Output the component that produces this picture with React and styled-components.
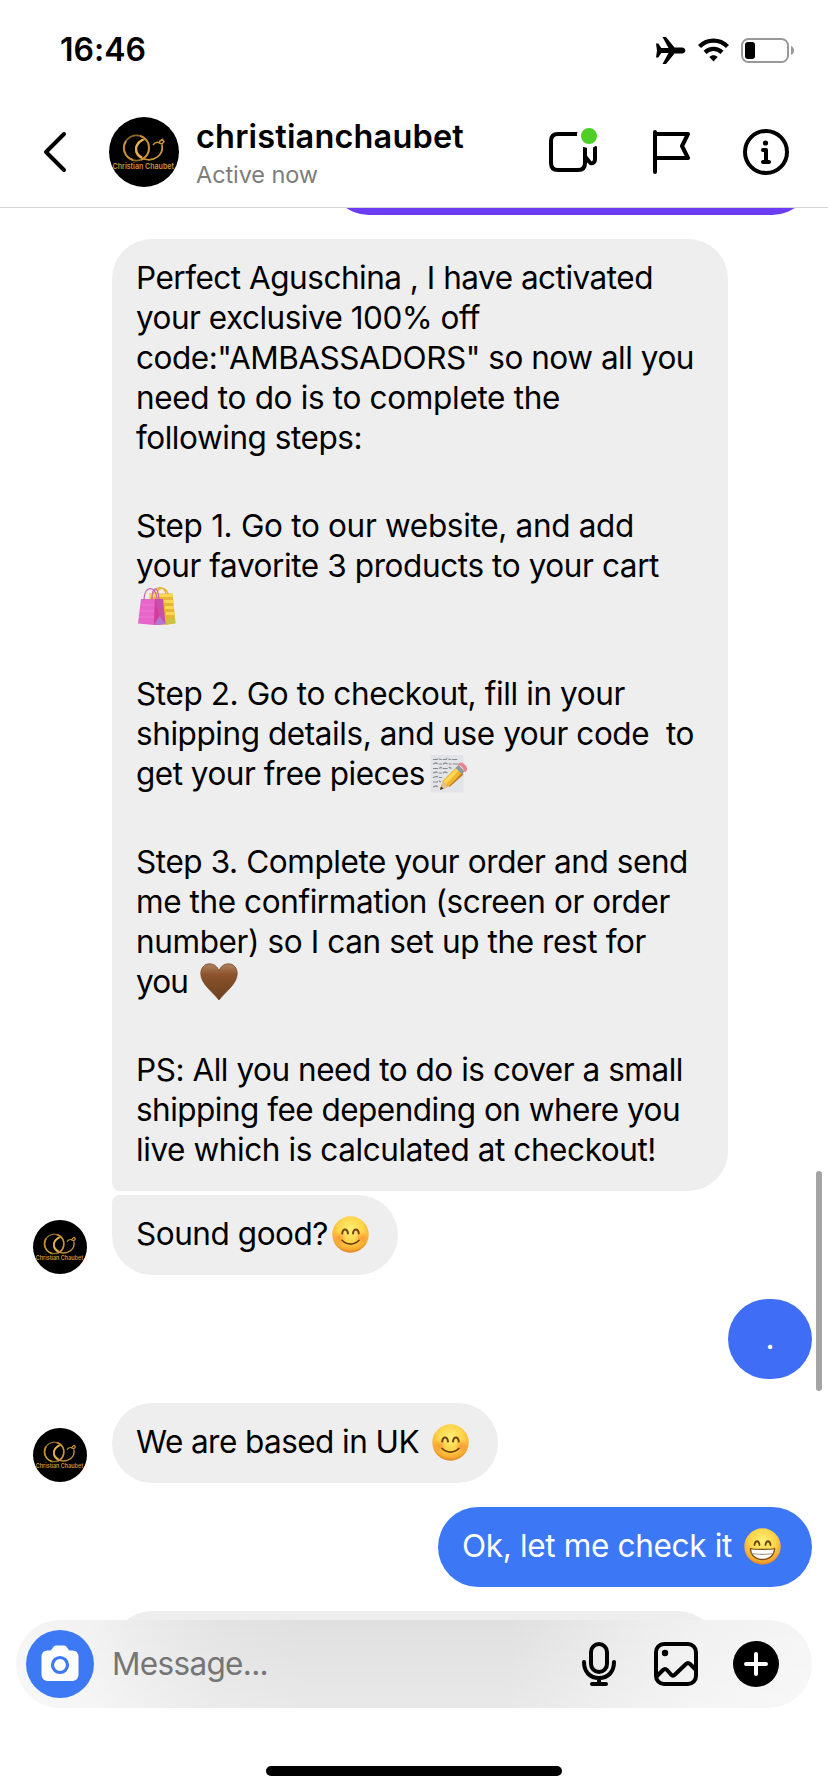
import React, { useLayoutEffect, useRef, useState } from "react";
import styled, { createGlobalStyle } from "styled-components";


const GlobalStyle = createGlobalStyle`
    * {
        box-sizing: border-box;
    }

    body {
        margin: 0;
        background: #fff;
        font-family: Inter, "Liberation Sans", sans-serif;
        color: #000;
    }
`

const Screen = styled.main`
    width: 828px;
    height: 1792px;
    position: relative;
    display: flex;
    flex-direction: column;
    overflow: hidden;
    background: #fff;
`

const StatusBar = styled.div`
    height: 97px;
    padding: 3px 34px 0 60px;
    display: flex;
    align-items: center;
    justify-content: space-between;
    flex-shrink: 0;
`

const Clock = styled.div`
    font-size: 32px;
    font-weight: 600;
    line-height: 40px;
`

const StatusIcons = styled.div`
    display: flex;
    align-items: center;
    gap: 12px;

    & > svg {
        display: block;
    }
`

const Header = styled.header`
    height: 111px;
    padding: 0 38px 0 43px;
    border-bottom: 1px solid #d6d6d6;
    display: flex;
    align-items: center;
    flex-shrink: 0;

    & svg {
        display: block;
        flex-shrink: 0;
    }
`

const Profile = styled.div`
    display: flex;
    align-items: center;
    gap: 17px;
    margin-left: 42px;
    flex: 1;
`

const ProfileText = styled.div`
    display: flex;
    flex-direction: column;
    padding-top: 5px;
`

const Username = styled.div`
    font-size: 32.5px;
    font-weight: 600;
    line-height: 40px;
`

const Activity = styled.div`
    font-size: 23.5px;
    line-height: 35px;
    color: #7d7d7d;
`

const HeaderActions = styled.div`
    display: flex;
    align-items: center;
    gap: 49px;
`

const FlagIcon = styled.svg`
    margin-right: 3px;
`

const Thread = styled.section`
    flex: 1;
    padding: 0 16px;
    display: flex;
    flex-direction: column;
    overflow: hidden;
`

const Message = styled.div`
    display: flex;
    align-items: flex-end;
    justify-content: ${({ $sent }) => ($sent ? "flex-end" : "flex-start")};
    margin-top: ${({ $gap }) => $gap ?? 24}px;
    flex-shrink: 0;
`

const AvatarSlot = styled.div`
    width: 96px;
    padding: 0 0 1px 17px;

    & > svg {
        display: block;
    }
`

const Bubble = styled.div`
    width: ${({ $width }) => $width}px;
    min-height: 80px;
    padding: 19px 24px 21px;
    border-radius: ${({ $radius }) => $radius || "40px"};
    background: ${({ $color }) => $color || "#eee"};
    color: ${({ $light }) => ($light ? "#fff" : "#000")};
    font-size: 31.5px;
`

const PreviousBubble = styled(Bubble)`
    height: 7px;
    min-height: 0;
    padding: 0;
    overflow: hidden;
    background: none;

    &::before {
        content: "";
        display: block;
        height: 80px;
        margin-top: -73px;
        border-radius: 40px;
        background: #6b3cf3;
    }
`

const Line = styled.div`
    height: 40px;
    line-height: 40px;
    display: flex;
    align-items: center;
    gap: ${({ $gap }) => $gap || 0}px;

    & > svg {
        display: block;
        flex-shrink: 0;
    }
`

const Blank = styled.div`
    height: 48px;
`

const Dot = styled.div`
    line-height: 40px;
    text-align: center;
`

const Tracked = styled.span`
    display: inline-block;
    white-space: pre;
`

const ScrollThumb = styled.div`
    position: absolute;
    top: 1171px;
    right: 6px;
    width: 6px;
    height: 220px;
    border-radius: 3px;
    background: #a4a4a4;
`

const Composer = styled.div`
    position: absolute;
    left: 16px;
    right: 16px;
    bottom: 84px;
    height: 88px;
    padding: 0 33px 0 10px;
    border-radius: 44px;
    background:
        linear-gradient(to bottom, transparent, rgba(255, 255, 255, 0.28)),
        linear-gradient(to right, #f5f5f5 0, #f2f2f2 9%, #eaeaea 17%, #e3e3e3 26%, #e0e0e0 36%, #e0e0e0 62%, #e9e9e9 74%, #f1f1f1 86%, #f5f5f5);
    display: flex;
    align-items: center;

    & svg {
        display: block;
        flex-shrink: 0;
    }
`

const CameraButton = styled.div`
    width: 68px;
    height: 68px;
    border-radius: 50%;
    background: #3d79f5;
    display: flex;
    align-items: center;
    justify-content: center;
`

const Placeholder = styled.div`
    flex: 1;
    padding-left: 18px;
    font-size: 31.5px;
    line-height: 40px;
    color: #757575;
`

const ComposerActions = styled.div`
    display: flex;
    align-items: center;
    gap: 34px;
`

const HomeIndicator = styled.div`
    position: absolute;
    left: 266px;
    bottom: 16px;
    width: 296px;
    height: 10px;
    border-radius: 5px;
    background: #000;
`

// Spreads the letters so that the run ends at the given width
const Fit = ({ width, children }) => {
    const ref = useRef(null);
    const [spacing, setSpacing] = useState(0);

    useLayoutEffect(() => {
        const natural = ref.current.getBoundingClientRect().width;
        setSpacing((width - natural) / children.length);
    }, [width, children]);

    return <Tracked ref={ref} style={{ letterSpacing: spacing }}>{children}</Tracked>
}

const Avatar = ({ size }) => (
    <svg width={size} height={size} viewBox="0 0 70 70">
        <circle cx="35" cy="35" r="35" fill="#000" />
        <g fill="none" stroke="#c89335">
            <circle cx="27.5" cy="31" r="12.6" strokeWidth="1.6" stroke="#8e6928" />
            <path d="M31 18.9a12.6 12.6 0 0 1 1 23.8M17 24a12.6 12.6 0 0 0 7 19" strokeWidth="2" />
            <path d="M36 22c-12 4-12 17-1 20 10 3 20-4 18-14" strokeWidth="1.8" />
            <path d="M34 22.5c-9 5-9 14-1 18" strokeWidth="2.2" stroke="#e5b34b" />
            <path d="M44 28c3-4 6-3 8.500-1M51 24l2.500-1.500 1.500 2-2 2.500-2.500-1z" strokeWidth="1.500" />
        </g>
        <text x="3.500" y="52" fontSize="7.400" fontWeight="600" textLength="61.500" lengthAdjust="spacingAndGlyphs" fill="#c89335">Christian Chaubet</text>
    </svg>
)

const Smile = ({ grin }) => (
    <svg width="37" height="37" viewBox="0 0 37 37">
        <defs>
            <radialGradient id="face" cx="50%" cy="36%" r="64%">
                <stop offset="0" stopColor="#fff176" />
                <stop offset=".55" stopColor="#fed449" />
                <stop offset=".85" stopColor="#f8ac31" />
                <stop offset="1" stopColor="#dd8124" />
            </radialGradient>
            <radialGradient id="blush">
                <stop offset="0" stopColor="#f5762d" stopOpacity=".6" />
                <stop offset="1" stopColor="#f5762d" stopOpacity="0" />
            </radialGradient>
        </defs>
        <circle cx="18.500" cy="18.500" r="18.200" fill="url(#face)" />
        {grin ? (
            <>
                <path d="M10.500 17c.7-5 4.300-5 5 0M21.500 17c.7-5 4.300-5 5 0" fill="none" stroke="#70400f" strokeWidth="1.800" strokeLinecap="round" />
                <path d="M6.500 20.500c4 1.200 20 1.200 24 0 .2 6-4.500 11-12 11s-12.200-5-12-11z" fill="#fff" stroke="#7b4d17" strokeWidth="1.300" strokeLinejoin="round" />
                <path d="M7.500 25.300c5 1.500 17 1.500 22 0" fill="none" stroke="#a5988b" strokeWidth="1.200" />
            </>
        ) : (
            <>
                <circle cx="7.500" cy="22" r="6.500" fill="url(#blush)" />
                <circle cx="29.500" cy="22" r="6.500" fill="url(#blush)" />
                <path d="M10.200 17.500c.7-5.500 5-5.500 5.800 0M21 17.500c.7-5.500 5-5.500 5.800 0" fill="none" stroke="#70400f" strokeWidth="2" strokeLinecap="round" />
                <path d="M10 24.300c4.500 5 12.500 5 17 0" fill="none" stroke="#70400f" strokeWidth="1.700" strokeLinecap="round" />
            </>
        )}
    </svg>
)

const Bags = () => (
    <svg width="42" height="40" viewBox="-2 0 42 40">
        <path d="M18 12c0-13 12-13 13 0M15 9c2-9 11-10 13-1" fill="none" stroke="#e3b12e" strokeWidth="1.300" />
        <path d="M11 7.500h23.500L37.500 37l-9 2-13-2z" fill="#e9b62f" />
        <path d="M11 8h23.500v3H11zM26 14h9.200v3H26zM27 20h8.800v3H27zM28 26h8.400v3H28z" fill="#f8d850" />
        <path d="M29 33l8-1 .5 5.500-9.500.500z" fill="#c9c33f" />
        <path d="M3 13h17l7 25-11 1-16-1.500z" fill="#e764c8" />
        <path d="M17 13h8l2.500 25-11.500 1z" fill="#c850ad" />
        <path d="M17 13l-1 26 5.500-9z" fill="#d63c98" />
        <path d="M16 39l5.500-9 6 8z" fill="#b276d2" />
        <path d="M2.500 19h14M2 25h14M1 31h15" stroke="#ef7bd2" strokeWidth="1.200" />
        <path d="M6 14C6-1 18-1 19 13M14 13c0-14 6-13 7 0" fill="none" stroke="#cf62b3" strokeWidth="1.200" />
    </svg>
)

const Memo = () => (
    <svg width="38" height="40" viewBox="0 0 38 40">
        <path d="M.5 1h33v37.500H.5z" fill="#e2e4e7" />
        <path d="M3 5.500h4l1-1 3 1h5l1-1 3 1h8M3 10l3-1 3 1h4l2-1 3 1h10M3 14.500h6l2-1 2 1h4l2-1 3 1M3 19l3-1 2 1h5l2-1 3 1M3 23.500l4-1 2 1h4M3 28h4l2-1 2 1M3 33l3-1 3 1" fill="none" stroke="#85888c" strokeWidth="1.200" strokeDasharray="5 1.200 3 1" />
        <path d="M10 36l2.500-9 14-14 6.500 6.500-14.500 13z" fill="#f4b52a" />
        <path d="M14 27l13-13 2 2-13 14z" fill="#ffdb58" />
        <path d="M19 32l13-13 1.500 1.500-14 12.500z" fill="#bd7822" />
        <path d="M10 36l2.500-9 2.500 1 1 3 2.500 2z" fill="#e5c18e" />
        <path d="M10 36l1-3.500 2.500 2z" fill="#30302d" />
        <path d="M25.500 14l3-3 6 6-2.500 3.500z" fill="#8f9a9e" />
        <path d="M28 11c2-2 8 3 6.500 6.500l1-1C38 13 32 8.500 29.500 10z" fill="#d9707c" stroke="#e48791" strokeWidth="2" />
    </svg>
)

const Heart = () => (
    <svg width="38" height="38" viewBox="0 0 38 38">
        <defs>
            <linearGradient id="brown" x1="0" y1="0" x2="0" y2="1">
                <stop offset="0" stopColor="#b28463" />
                <stop offset=".3" stopColor="#8c532c" />
                <stop offset="1" stopColor="#69401f" />
            </linearGradient>
        </defs>
        <path d="M19 37C13 29 .8 21 .8 10.500.8 5 4.500.8 9.500.8c4.500 0 8 3 9.500 7 1.500-4 5-7 9.500-7 5 0 8.700 4.200 8.700 9.700C37.200 21 25 29 19 37z" fill="url(#brown)" stroke="#74441f" strokeWidth=".8" />
    </svg>
)

const steps = [
    ["Perfect Aguschina , I have activated", 517],
    ["your exclusive 100% off", 344],
    ["code:\"AMBASSADORS\" so now all you", 558],
    ["need to do is to complete the", 424],
    ["following steps:", 226],
    null,
    ["Step 1. Go to our website, and add", 498],
    ["your favorite 3 products to your cart", 523],
    [null, 0, <Bags />],
    null,
    ["Step 2. Go to checkout, fill in your", 489],
    ["shipping details, and use your code  to", 558],
    ["get your free pieces", 289, <Memo />, 5],
    null,
    ["Step 3. Complete your order and send", 552],
    ["me the confirmation (screen or order", 534],
    ["number) so I can set up the rest for", 510],
    ["you", 52, <Heart />, 12],
    null,
    ["PS: All you need to do is cover a small", 547],
    ["shipping fee depending on where you", 544],
    ["live which is calculated at checkout!", 520],
]

const App = () => {
    return (
        <>
            <GlobalStyle />
            <Screen>
                <StatusBar>
                    <Clock><Fit width={86}>16:46</Fit></Clock>
                    <StatusIcons>
                        <svg width="30" height="27" viewBox="0 0 30 27">
                            <path d="M0 6.500h2.300l3 4.500h7.200L6.500 0H10l8.500 10.500H26c4.500 0 4.500 6 0 6h-7.500L10 27H6.500l6-11H5.300l-3 4.500H0l1-7z" />
                        </svg>
                        <svg width="31" height="24" viewBox="0 0 31 24">
                            <g fill="none" stroke="#000" strokeWidth="4.300">
                                <path d="M1.500 8.500c8-7.800 20-7.800 28 0" />
                                <path d="M7 14.300c5-4.600 12-4.600 17 0" />
                            </g>
                            <path d="M11.300 19c2.500-2.200 5.900-2.200 8.400 0l-4.200 4.500z" />
                        </svg>
                        <svg width="53" height="25" viewBox="0 0 53 25">
                            <rect x="1" y="1" width="46" height="23" rx="6.500" fill="none" stroke="#999" strokeWidth="2" />
                            <rect x="4" y="4" width="10" height="17" rx="3" />
                            <path d="M50 8c4 1.500 4 7.500 0 9z" fill="#999" />
                        </svg>
                    </StatusIcons>
                </StatusBar>

                <Header>
                    <svg width="24" height="44" viewBox="0 0 24 44" fill="none" stroke="#000" strokeWidth="4" strokeLinecap="round" strokeLinejoin="round">
                        <path d="M21 4L3 22l18 18" />
                    </svg>
                    <Profile>
                        <Avatar size={70} />
                        <ProfileText>
                            <Username><Fit width={268}>christianchaubet</Fit></Username>
                            <Activity><Fit width={122}>Active now</Fit></Activity>
                        </ProfileText>
                    </Profile>
                    <HeaderActions>
                        <svg width="54" height="50" viewBox="0 -1 54 50" fill="none" stroke="#000" strokeWidth="4">
                            <path d="M31.500 6H12c-4.500 0-7 2.500-7 7v22c0 4.500 2.500 7 7 7h20c4.500 0 7-2.500 7-7V19" />
                            <path d="M49 19.500V31c0 4.500-4 5.500-6 2.500L39.500 29" strokeLinecap="round" />
                            <circle cx="43" cy="8" r="10" fill="#4dcf23" stroke="#fff" />
                        </svg>
                        <FlagIcon width="41" height="48" viewBox="0 0 41 48" fill="none" stroke="#000" strokeWidth="4" strokeLinecap="round" strokeLinejoin="round">
                            <path d="M6 4v40M6 6h33l-6 12 6 12H6" />
                        </FlagIcon>
                        <svg width="48" height="48" viewBox="0 0 48 48" fill="none" stroke="#000" strokeWidth="4">
                            <circle cx="24" cy="24" r="21" />
                            <path d="M21 22h3v12M21 34h6" strokeLinecap="round" strokeLinejoin="round" />
                            <circle cx="23.500" cy="15" r="2.600" fill="#000" stroke="none" />
                        </svg>
                    </HeaderActions>
                </Header>

                <Thread>
                    <Message $sent $gap={0}>
                        <PreviousBubble $width={483} $radius="0" />
                    </Message>

                    <Message>
                        <AvatarSlot />
                        <Bubble $width={616} $radius="40px 40px 40px 8px">
                            {steps.map((line, i) => line ? (
                                <Line key={i} $gap={line[3]}>
                                    {line[0] && <Fit width={line[1]}>{line[0]}</Fit>}
                                    {line[2]}
                                </Line>
                            ) : <Blank key={i} />)}
                        </Bubble>
                    </Message>

                    <Message $gap={4}>
                        <AvatarSlot><Avatar size={54} /></AvatarSlot>
                        <Bubble $width={286} $radius="8px 40px 40px 40px">
                            <Line $gap={4}><Fit width={192}>Sound good?</Fit><Smile /></Line>
                        </Bubble>
                    </Message>

                    <Message $sent>
                        <Bubble $width={84} $color="#3f6df6" $light><Dot>.</Dot></Bubble>
                    </Message>

                    <Message>
                        <AvatarSlot><Avatar size={54} /></AvatarSlot>
                        <Bubble $width={386}>
                            <Line $gap={13}><Fit width={283}>We are based in UK</Fit><Smile /></Line>
                        </Bubble>
                    </Message>

                    <Message $sent>
                        <Bubble $width={374} $color="#3c78f6" $light>
                            <Line $gap={12}><Fit width={270}>Ok, let me check it</Fit><Smile grin /></Line>
                        </Bubble>
                    </Message>

                    <Message>
                        <AvatarSlot />
                        <Bubble $width={606} />
                    </Message>
                </Thread>

                <ScrollThumb />

                <Composer>
                    <CameraButton>
                        <svg width="38" height="38" viewBox="0 0 38 38">
                            <path d="M12 2.500C13 1 14 .5 15.500.5h7c1.500 0 2.500.5 3.500 2l1.500 2c.5.700 1 1 2 1h1c4.500 0 7 2 7 6.500v17c0 4.500-2.500 7-7 7h-23c-4.500 0-7-2.500-7-7V12c0-4.500 2.500-6.500 7-6.500h1c1 0 1.500-.3 2-1z" fill="#fff" />
                            <circle cx="19" cy="20" r="7.500" fill="none" stroke="#3d79f5" strokeWidth="3.200" />
                        </svg>
                    </CameraButton>
                    <Placeholder><Fit width={156}>Message...</Fit></Placeholder>
                    <ComposerActions>
                        <svg width="38" height="46" viewBox="0 0 38 46" fill="none" stroke="#000" strokeWidth="4" strokeLinecap="round">
                            <rect x="10" y="3" width="16" height="28" rx="8" />
                            <path d="M3 21c0 10 6 16 15 16s15-6 15-16M18 37v6M11 43h14" />
                        </svg>
                        <svg width="46" height="46" viewBox="0 0 46 46" fill="none" stroke="#000" strokeWidth="4" strokeLinejoin="round">
                            <rect x="3" y="3" width="40" height="40" rx="8" />
                            <path d="M3 36l7-7c1.500-1.500 2.500-1.500 4 0l4 4.500c1.500 1.500 2.500 1.500 4 0L33 23c1.500-1.500 2.500-1.500 4 0l6 6" />
                            <circle cx="12" cy="12" r="3.200" fill="#000" stroke="none" />
                        </svg>
                        <svg width="46" height="46" viewBox="0 0 46 46" fill="none" stroke="#fff" strokeWidth="4" strokeLinecap="round">
                            <circle cx="23" cy="23" r="23" fill="#000" stroke="none" />
                            <path d="M23 13v20M13 23h20" />
                        </svg>
                    </ComposerActions>
                </Composer>

                <HomeIndicator />
            </Screen>
        </>
    )
}

export default App;
